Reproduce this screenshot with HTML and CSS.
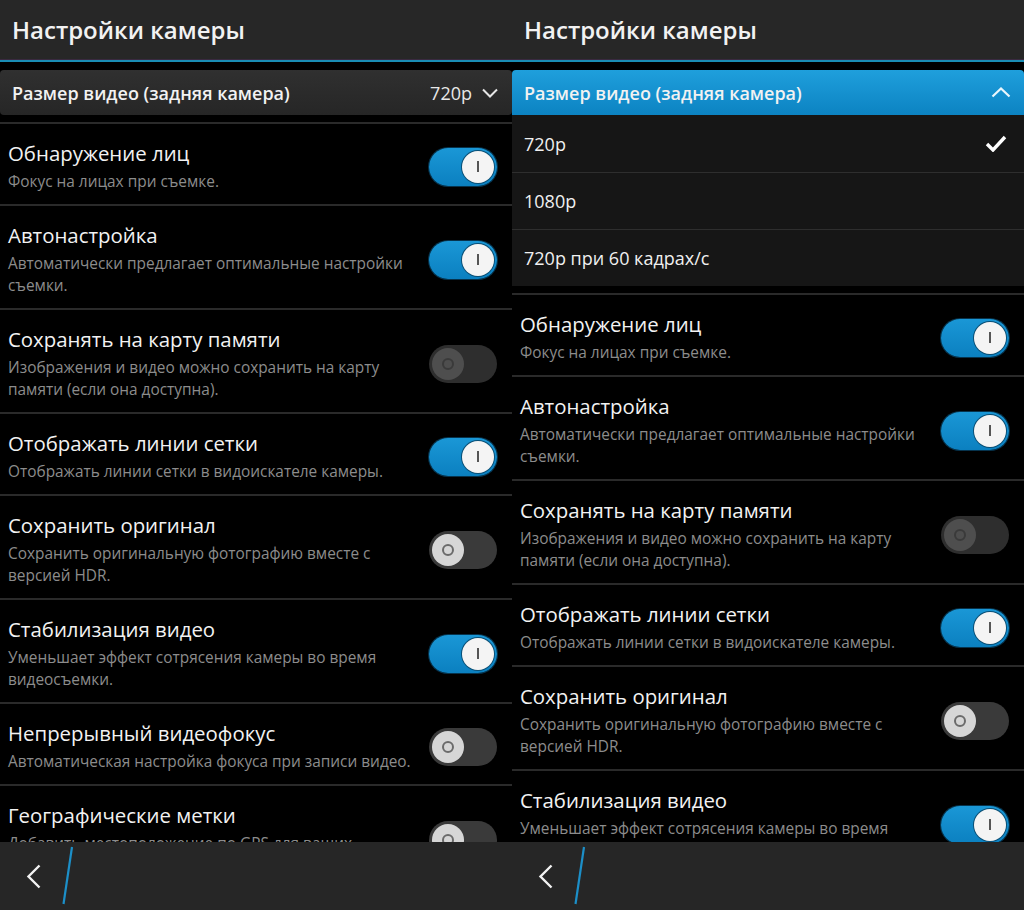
FILE: index.html
```html
<!DOCTYPE html>
<html lang="ru">
<head>
  <meta charset="UTF-8">
  <meta name="viewport" content="width=device-width, initial-scale=1.0">
  <title>Настройки камеры</title>
  <link rel="stylesheet" href="styles.css">
</head>
<body>

  <div class="screens">

    <!-- Экран 1: список закрыт -->
    <section class="screen">
      <header class="title-bar">
        <h1>Настройки камеры</h1>
      </header>
      <div class="content">
        <div class="dropdown">
          <div class="dropdown-head">
            <span class="dropdown-label">Размер видео (задняя камера)</span>
            <span class="dropdown-value">720p</span>
            <svg class="chevron" width="16" height="10" viewBox="0 0 16 10"><polyline points="1,1.5 8,8.5 15,1.5" fill="none" stroke="#e6e6e6" stroke-width="2"/></svg>
          </div>
        </div>
        <div class="settings" id="settingsLeft"></div>
      </div>
      <footer class="action-bar">
        <svg width="90" height="68" viewBox="0 0 90 68">
          <polyline points="39.5,23.5 28.5,34.5 39.5,45.5" fill="none" stroke="#f2f2f2" stroke-width="2.4"/>
          <line x1="72" y1="5" x2="63.5" y2="62" stroke="#1c8fc8" stroke-width="2.2"/>
        </svg>
      </footer>
    </section>

    <!-- Экран 2: список открыт -->
    <section class="screen">
      <header class="title-bar">
        <h1>Настройки камеры</h1>
      </header>
      <div class="content">
        <div class="dropdown open">
          <div class="dropdown-head">
            <span class="dropdown-label">Размер видео (задняя камера)</span>
            <svg class="chevron" width="20" height="11" viewBox="0 0 20 11"><polyline points="1.5,9.5 10,1.5 18.5,9.5" fill="none" stroke="#eaf6fc" stroke-width="2.2"/></svg>
          </div>
          <div class="dropdown-options">
            <div class="option">720p
              <svg class="check" width="22" height="17" viewBox="0 0 22 17"><polyline points="2,9 8,15 20,2" fill="none" stroke="#fff" stroke-width="3.4"/></svg>
            </div>
            <div class="option">1080p</div>
            <div class="option">720p при 60 кадрах/с</div>
          </div>
        </div>
        <div class="settings" id="settingsRight"></div>
      </div>
      <footer class="action-bar">
        <svg width="90" height="68" viewBox="0 0 90 68">
          <polyline points="39.5,23.5 28.5,34.5 39.5,45.5" fill="none" stroke="#f2f2f2" stroke-width="2.4"/>
          <line x1="72" y1="5" x2="63.5" y2="62" stroke="#1c8fc8" stroke-width="2.2"/>
        </svg>
      </footer>
    </section>

  </div>

  <script>
    const settings = [
      { title: 'Обнаружение лиц', text: 'Фокус на лицах при съемке.', state: 'on' },
      { title: 'Автонастройка', text: 'Автоматически предлагает оптимальные настройки съемки.', state: 'on' },
      { title: 'Сохранять на карту памяти', text: 'Изображения и видео можно сохранить на карту памяти (если она доступна).', state: 'disabled' },
      { title: 'Отображать линии сетки', text: 'Отображать линии сетки в видоискателе камеры.', state: 'on' },
      { title: 'Сохранить оригинал', text: 'Сохранить оригинальную фотографию вместе с версией HDR.', state: 'off' },
      { title: 'Стабилизация видео', text: 'Уменьшает эффект сотрясения камеры во время видеосъемки.', state: 'on' },
      { title: 'Непрерывный видеофокус', text: 'Автоматическая настройка фокуса при записи видео.', state: 'off' },
      { title: 'Географические метки', text: 'Добавить местоположение по GPS для ваших фотографий и видео.', state: 'off' }
    ];

    function renderSettings(containerId) {
      const container = document.getElementById(containerId);
      container.innerHTML = settings.map(item => `
        <div class="setting">
          <div class="setting-text">
            <div class="setting-title">${item.title}</div>
            <div class="setting-desc">${item.text}</div>
          </div>
          <span class="toggle ${item.state}"><span class="knob"></span></span>
        </div>
      `).join('');
    }

    renderSettings('settingsLeft');
    renderSettings('settingsRight');
  </script>
</body>
</html>
```

FILE: styles.css
```css
/* Общие стили */
body {
  margin: 0;
  background-color: #000;
  font-family: 'Open Sans', 'Noto Sans', sans-serif;
  color: #f0f0f0;
}

.screens {
  display: flex;
}

.screen {
  width: 512px;
  height: 910px;
  display: flex;
  flex-direction: column;
  background-color: #000;
  overflow: hidden;
}

/* Заголовок */
.title-bar {
  height: 60px;
  background-color: #272727;
  border-bottom: 2px solid #1a8db5;
  box-shadow: inset 0 -1px 0 #3a2a40;
}

.title-bar h1 {
  margin: 0;
  padding-left: 12px;
  font-size: 24px;
  font-weight: 600;
  line-height: 60px;
  color: #f2f2f2;
}

.content {
  flex: 1;
  overflow: hidden;
  padding-top: 8px;
}

/* Выпадающий список */
.dropdown {
  margin-bottom: 7px;
}

.dropdown-head {
  height: 45px;
  display: flex;
  align-items: center;
  padding: 0 14px 0 12px;
  background: linear-gradient(#303030, #262626);
  border-radius: 4px;
}

.dropdown-label {
  font-size: 18px;
  font-weight: 600;
  color: #f2f2f2;
}

.dropdown-value {
  margin-left: auto;
  margin-right: 10px;
  font-size: 18px;
  color: #e8e8e8;
}

.chevron {
  flex-shrink: 0;
}

.dropdown.open .dropdown-head {
  background: linear-gradient(#1f9fdc, #0c83c2);
  border-radius: 4px 4px 0 0;
}

.dropdown.open .chevron {
  margin-left: auto;
  margin-right: -1px;
}

.dropdown-options {
  background-color: #161616;
}

.option {
  height: 56px;
  display: flex;
  align-items: center;
  padding: 0 17px 0 12px;
  font-size: 18px;
  color: #f0f0f0;
  border-top: 1px solid #2e2e2e;
}

.option:first-child {
  border-top: none;
  height: 57px;
}

.check {
  margin-left: auto;
}

/* Настройки */
.setting {
  display: flex;
  align-items: center;
  padding: 16px 15px 11px 8px;
  border-top: 2px solid #2a2a2a;
}

.setting-text {
  flex: 1;
  padding-right: 8px;
}

.setting-title {
  font-size: 20.4px;
  line-height: 26px;
  color: #f2f2f2;
}

.setting-desc {
  margin-top: 5px;
  font-size: 15.4px;
  line-height: 22px;
  color: #8c8c8c;
}

/* Переключатели */
.toggle {
  flex-shrink: 0;
  width: 68px;
  height: 38px;
  border-radius: 19px;
  display: flex;
  align-items: center;
  padding: 0 3px;
  box-sizing: border-box;
  background-color: #3a3a3a;
}

.knob {
  width: 32px;
  height: 32px;
  border-radius: 50%;
  display: flex;
  align-items: center;
  justify-content: center;
  background-color: #d6d6d6;
}

.knob::after {
  content: '';
  width: 8px;
  height: 8px;
  border-radius: 50%;
  border: 2px solid #6b6b6b;
}

.toggle.on {
  justify-content: flex-end;
  background: linear-gradient(#1a97d6, #0b80c0);
  box-shadow: 0 0 0 1px #06334d;
}

.toggle.on .knob {
  background-color: #f4f4f4;
  box-shadow: 0 0 0 1px #0a4f75;
}

.toggle.on .knob::after {
  width: 2px;
  height: 11px;
  border: none;
  border-radius: 0;
  background-color: #555;
}

.toggle.disabled {
  background-color: #2e2e2e;
}

.toggle.disabled .knob {
  background-color: #4e4e4e;
}

.toggle.disabled .knob::after {
  border-color: #3a3a3a;
}

/* Нижняя панель */
.action-bar {
  height: 68px;
  flex-shrink: 0;
  background-color: #262626;
}

.action-bar svg {
  display: block;
}
```
